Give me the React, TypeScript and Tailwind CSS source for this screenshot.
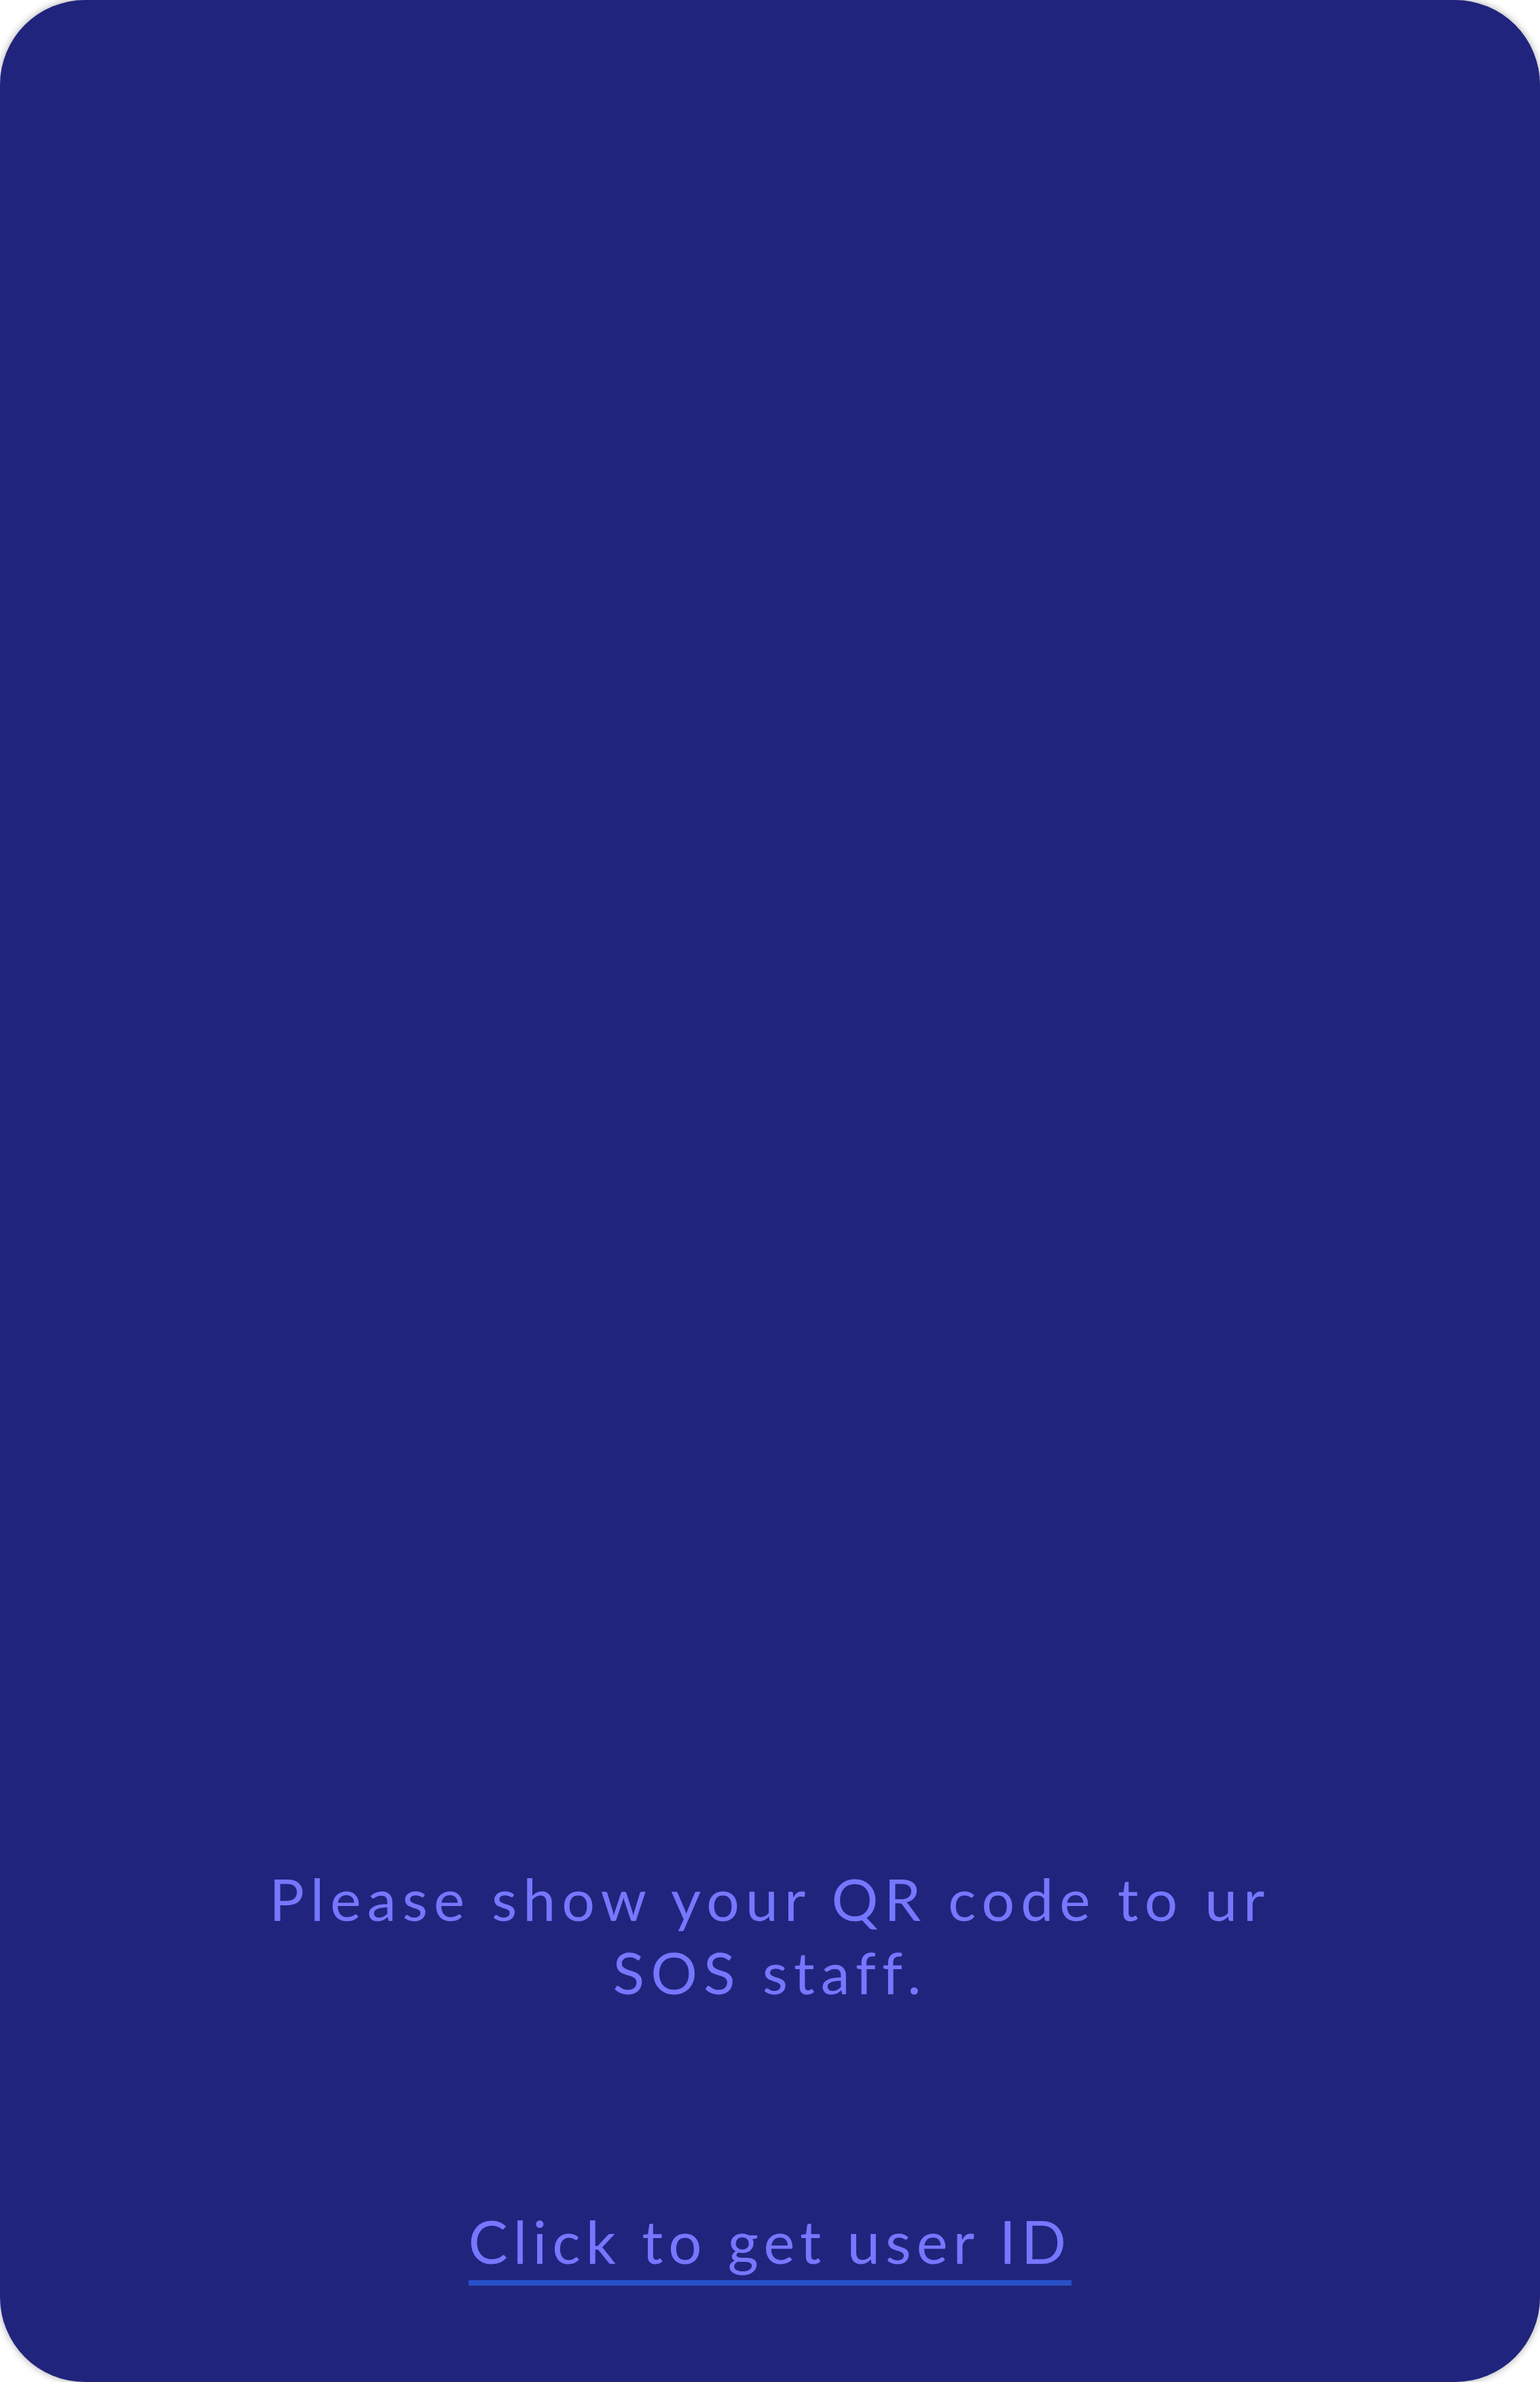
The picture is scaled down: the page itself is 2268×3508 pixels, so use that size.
export default function App() {
  return (
    <div className="w-[2268px] h-[3508px] bg-white overflow-hidden">
      <div
        className="flex flex-col items-center justify-end w-full h-full pb-[142px] rounded-[125px] bg-[#21247C] shadow-[0_0_12px_rgba(0,0,0,0.35)]"
        style={{ fontFamily: "Lato, 'Noto Sans', sans-serif" }}
      >
        {/* message */}
        <p className="max-w-[1540px] text-center text-[86px] leading-[108px] tracking-[9px] text-[#7677FF]">
          Please show your QR code to ur SOS staff.
        </p>

        {/* user id link */}
        <a className="inline-block mt-[289px] pb-[3px] border-b-[8px] border-[#2750C8] text-[87px] leading-[108px] tracking-[8px] text-[#7677FF] cursor-pointer">
          Click to get user ID
        </a>
      </div>
    </div>
  );
}
